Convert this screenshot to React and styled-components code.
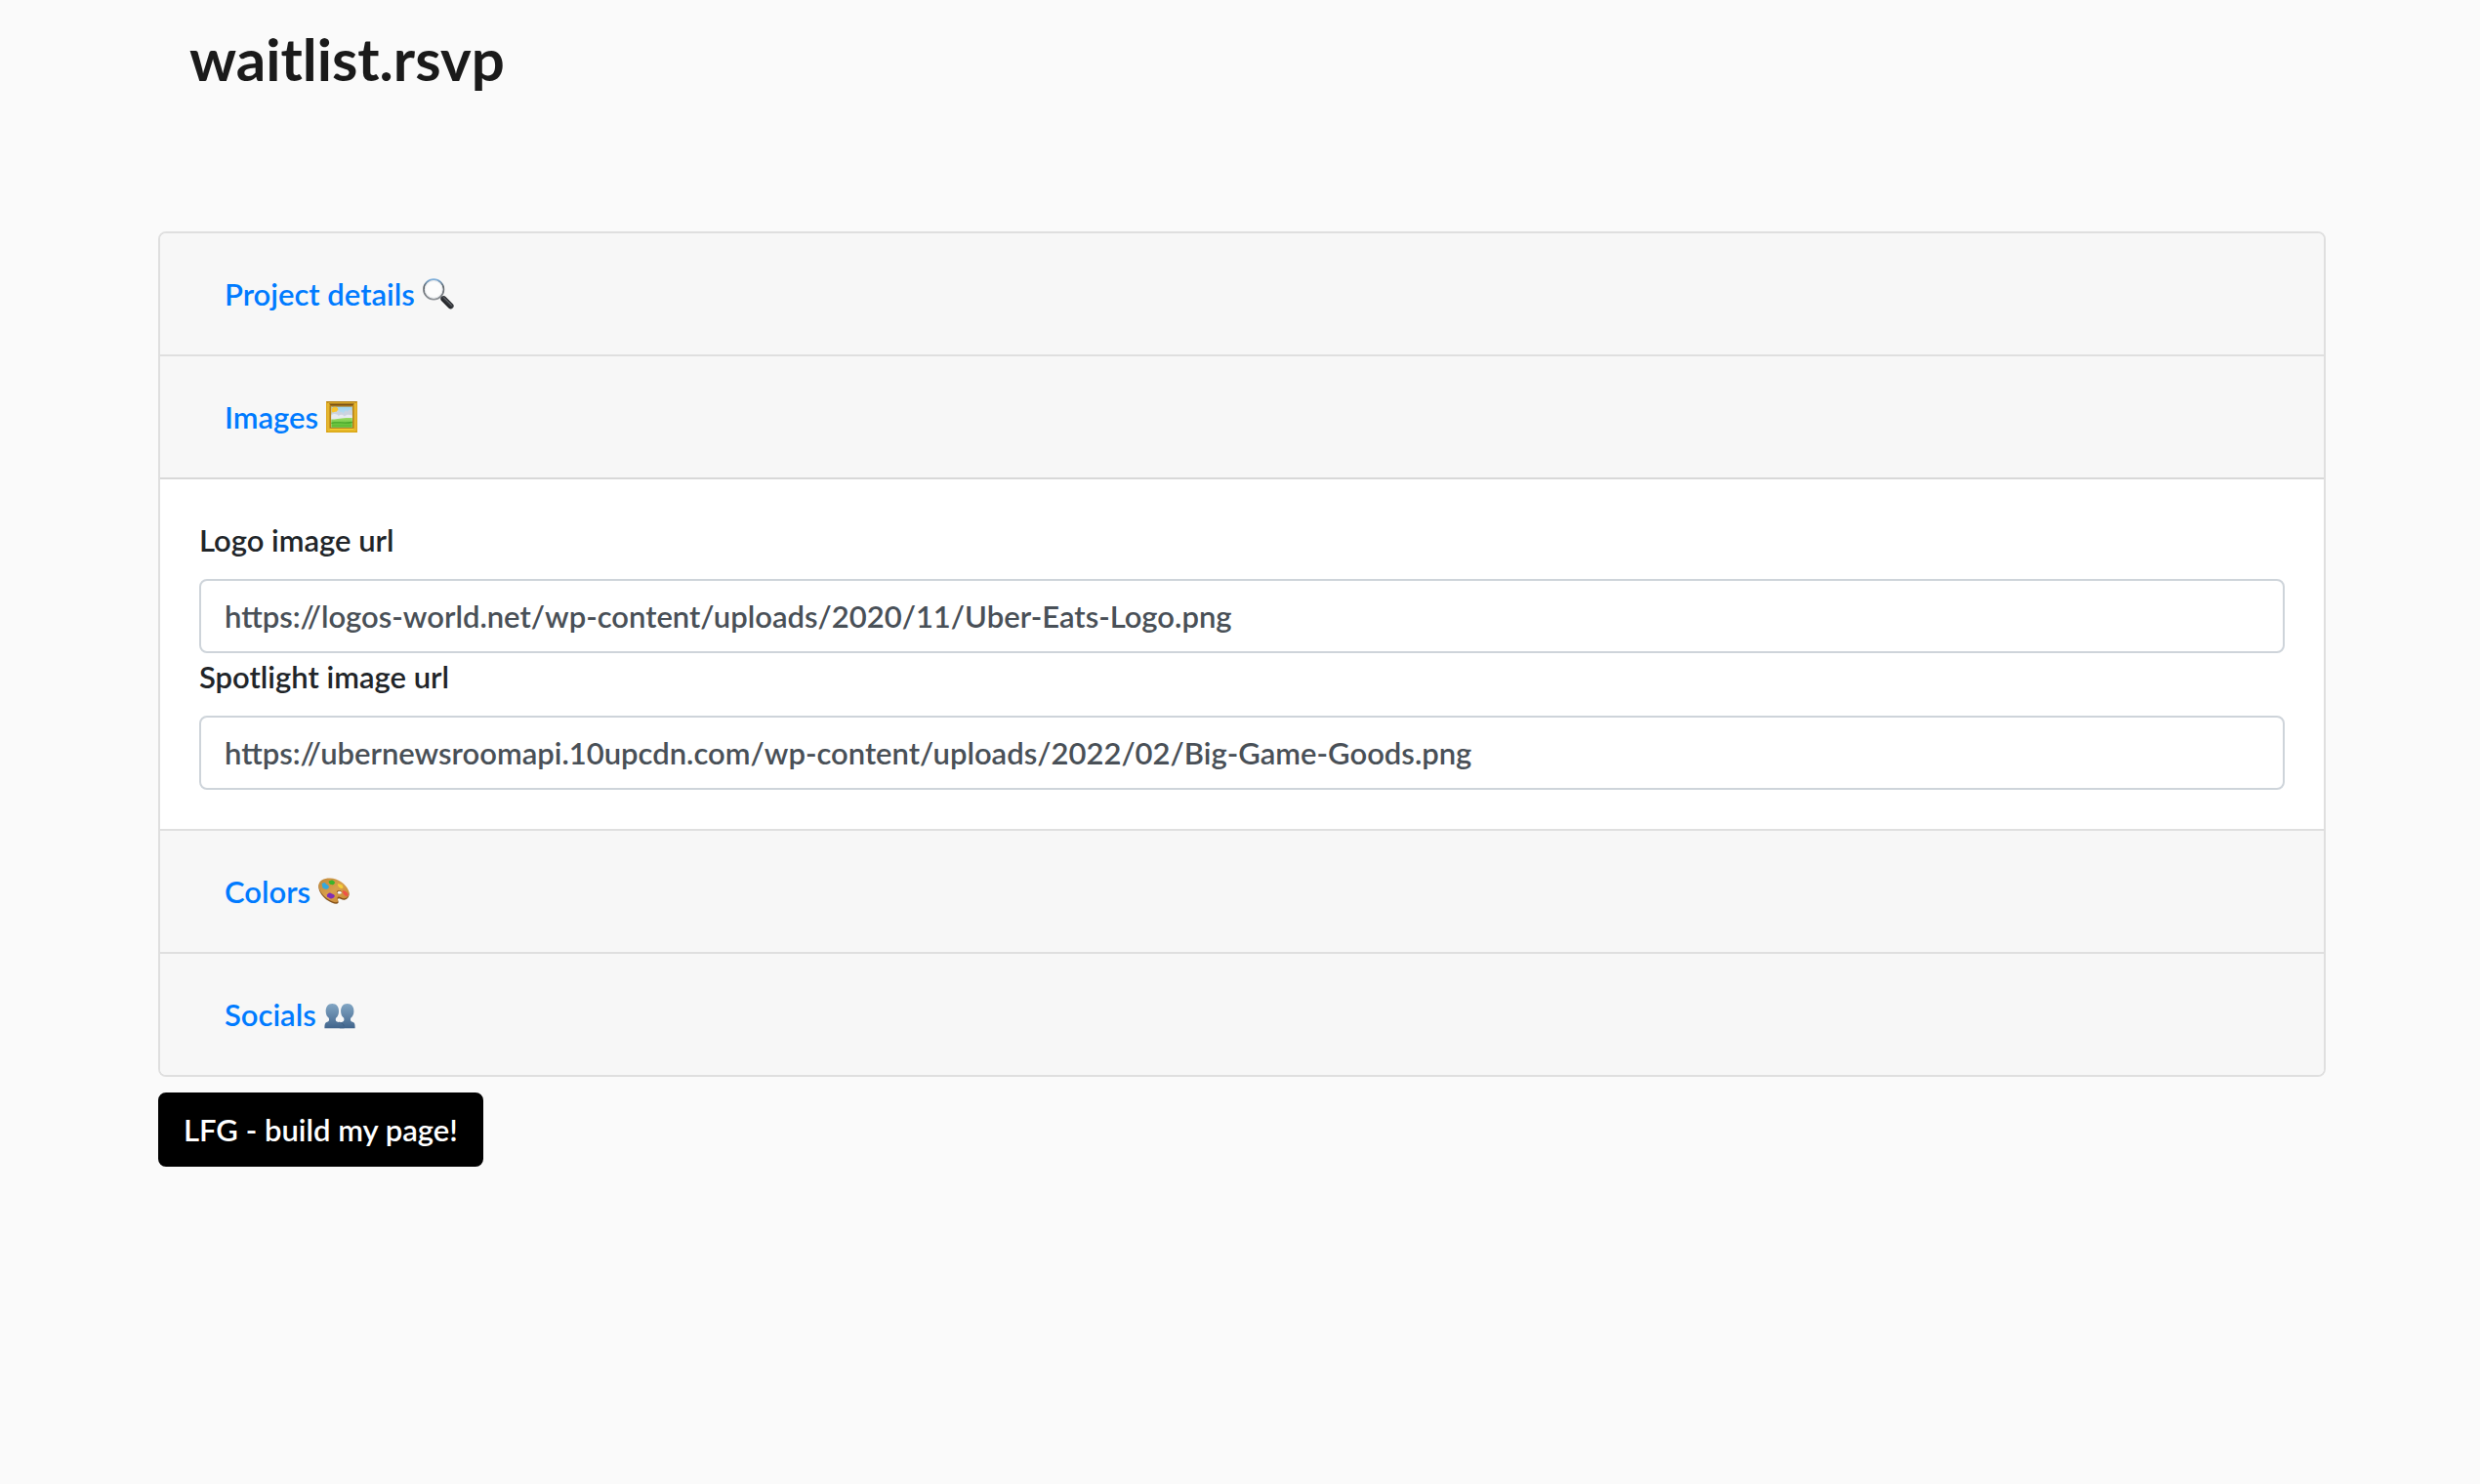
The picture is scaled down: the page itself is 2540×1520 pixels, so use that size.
//react
import React, { useState } from "react";

//style
import styled, { createGlobalStyle } from "styled-components";

const GlobalStyle = createGlobalStyle`
  *{box-sizing:border-box;}
  body{
    margin:0;
    background:#fafafa;
    color:#212529;
    font-family:Lato,"Liberation Sans",sans-serif;
    font-size:31px;font-weight:600;line-height:48px;
  }
`

function MagnifierIcon(){
  return (
    <Icon viewBox="0 0 32 32" aria-hidden="true">
      <defs>
        <linearGradient id="rim" x1="0" y1="0" x2="0" y2="1">
          <stop offset="0" stopColor="#7fb0dc"/>
          <stop offset="0.35" stopColor="#5c6268"/>
          <stop offset="1" stopColor="#8d9196"/>
        </linearGradient>
        <linearGradient id="handle" x1="0" y1="1" x2="1" y2="0">
          <stop offset="0" stopColor="#0c0c0e"/>
          <stop offset="0.6" stopColor="#3c3f44"/>
          <stop offset="1" stopColor="#141416"/>
        </linearGradient>
      </defs>
      <path d="M18.4 18.6l3 3" stroke="#6f7479" strokeWidth="2.4"/>
      <path d="M21.4 21.2l7.2 7.2" stroke="url(#handle)" strokeWidth="6" strokeLinecap="round"/>
      <path d="M21.6 19.9l7.8 7.6" stroke="#74787d" strokeWidth="0.9" strokeLinecap="round"/>
      <circle cx="11.2" cy="11.4" r="10.2" fill="#fcfcfc" stroke="url(#rim)" strokeWidth="1.7"/>
      <circle cx="11.2" cy="11.4" r="8.8" fill="none" stroke="#dde1e5" strokeWidth="0.7"/>
    </Icon>
  );
}

function FrameIcon(){
  return (
    <Icon viewBox="0 0 32 32" aria-hidden="true">
      <defs>
        <linearGradient id="sky" x1="0" y1="0" x2="0" y2="1">
          <stop offset="0" stopColor="#9fd3ee"/>
          <stop offset="1" stopColor="#e5eff3"/>
        </linearGradient>
        <linearGradient id="grass" x1="0" y1="0" x2="0" y2="1">
          <stop offset="0" stopColor="#9bdc66"/>
          <stop offset="1" stopColor="#55b82c"/>
        </linearGradient>
      </defs>
      <path d="M0 0h32v32H0z" fill="#dba520"/>
      <path d="M0 0h32l-3 3H3z" fill="#b8841a"/>
      <path d="M0 32h32l-3-3H3z" fill="#d9a511"/>
      <path d="M2 2h28v28H2z" fill="none" stroke="#f0c63b" strokeWidth="1"/>
      <path d="M3 2.4h26l-3.2 3H6.2z" fill="#795016"/>
      <path d="M3 29l2.6-2.4h20.8L29 29z" fill="#f8d732"/>
      <path d="M4.2 4.6h23.6v22.8H4.2z" fill="none" stroke="#a9751b" strokeWidth="1"/>
      <path d="M5.4 5.6h21.4v21.2H5.4z" fill="url(#sky)"/>
      <circle cx="9" cy="9" r="3.3" fill="#f9c42c"/>
      <path d="M5.4 13c2-1.7 3.4-2.7 5-2 1-2.6 3.4-2.4 4.2.2 1.8-.8 2.6.6 3.4 1.6 1-3.4 2.8-4.6 3.6-1.6 1.2-2.6 3.2-3 5.2-1.6V18H5.4z" fill="#ccd3df"/>
      <path d="M5.4 14.6c2.4-2.4 5.6-1.6 7.4.4 2-2 4.6-1 6 .4 2-2.2 5.4-2 8-.8V19H5.4z" fill="#e7eaf0"/>
      <path d="M5.4 18.4c6 .4 10-2 21.4-1.4v9.8H5.4z" fill="url(#grass)"/>
      <path d="M5.4 21.8c6-1.4 13 .6 21.4-1v1.4c-8 1.4-14-.4-21.4.8z" fill="#46a52a"/>
    </Icon>
  );
}

function PaletteIcon(){
  return (
    <Icon viewBox="0 0 32 32" aria-hidden="true">
      <defs>
        <linearGradient id="wood" x1="0" y1="0" x2="1" y2="1">
          <stop offset="0" stopColor="#c0883a"/>
          <stop offset="0.5" stopColor="#d9a04c"/>
          <stop offset="1" stopColor="#c5832f"/>
        </linearGradient>
      </defs>
      <path d="M.4 10.6C.9 5.8 6 3.2 12.2 3.4 20 3.7 28 9 31 16.2c1.6 4-.4 8-4.2 8.500-2.800.3-4.600-1.800-6.300-1.300-1.700.6 1 3-.2 4.600-1.400 1.700-6.300.5-10.300-2.400C4.200 21.600-.1 15.600.4 10.600z" fill="#845018"/>
      <path d="M.4 9.600C.9 5 6 2.400 12.200 2.600 20 2.900 28 8.200 31 15.200c1.600 4-.4 7.600-4.200 8.100-2.800.3-4.800-2.200-6.600-1.600-1.900.7.9 3.300-.3 4.900-1.300 1.500-5.900.3-9.900-2.500C4.200 20.200-.1 14.400.4 9.600z" fill="url(#wood)"/>
      <ellipse cx="21.400" cy="17" rx="2.500" ry="1.900" fill="#8a531d"/>
      <ellipse cx="21.700" cy="17.300" rx="2.100" ry="1.500" fill="#f7f7f7"/>
      <path d="M3.600 8.200c1.200-.3 2-1.600 3.400-.9.500 1.600 4 2 3.900 4.300-.2 1.800-2.200 2.500-3.700 2.200-1.300-.5-3.600-1.200-3-3z" fill="#35a9dd"/>
      <path d="M10.800 5.200c1.400.3 2-1.300 3.700-.6.800.8 2.500 1.300 2.500 2.600-.5 1.500-2.100 2.400-3.700 1.900-1.700-.3-2.900-1.900-2.500-3.900z" fill="#3bb52b"/>
      <path d="M19.900 8.200c2-.3 3 .9 4.600 1.100-.2 1 1.500 2.300.8 3.300-1.400.8-3.500.2-4.200-1-.3-1-1.600-1.700-1.200-3.400z" fill="#f4cf37"/>
      <path d="M24.700 15.400c2.200-.4 4.200 1 5.600 3 .6 1.400.3 2.500-.9 2.500-1.800-.2-3.500-1.400-4-3-.2-.8-1.100-1.300-.7-2.500z" fill="#ee5347"/>
      <path d="M8.700 19.600c1.300-1 2-2.700 4-1.800 1 .8 3 .8 4.100 2.500.2 1.600-1.600 3-3.500 3.200-2-.2-3.200-1.700-4.200-1.800z" fill="#812db5"/>
    </Icon>
  );
}

function PeopleIcon(){
  return (
    <Icon viewBox="0 0 32 32" aria-hidden="true">
      <defs>
        <linearGradient id="bust" x1="0" y1="0" x2="0" y2="1">
          <stop offset="0" stopColor="#82a6c4"/>
          <stop offset="1" stopColor="#42658c"/>
        </linearGradient>
      </defs>
      <path d="M23.7 5c4.400 0 7 3.200 6.700 8.300-.1 3.300-1.600 5.200-3.200 6.500-.8 3 .6 3.800 2.600 4.300 1.600.5 1.900 2.500 1.800 6.100H15.800c0-3.600.4-5.600 2-6.100 2-.6 3.200-1.600 2.400-4.300-1.800-1.300-3-3.500-3.100-6.500C16.900 8.400 19.300 5 23.700 5z" fill="url(#bust)"/>
      <path d="M8.300 5c4.400 0 7 3.200 6.700 8.300-.1 3.300-1.400 5.200-3 6.500-.8 3 .4 3.800 3 4.300 3.800.5 5.400 2.500 5.500 6.100H.4c0-3.600.4-5.600 2-6.100 2-.6 3.200-1.300 2.400-4.300-1.800-1.300-3-3.500-3.100-6.500C1.500 8.400 3.900 5 8.300 5z" fill="url(#bust)"/>
      <path d="M15 24.100c2.700.3 4.700 1.200 5.300 4" fill="none" stroke="#36587c" strokeWidth="0.7"/>
    </Icon>
  );
}

const sections = [
  { id:"details", title:"Project details", icon:<MagnifierIcon/>, fields:[] },
  { id:"images", title:"Images", icon:<FrameIcon/>, fields:[
    { id:"logo", label:"Logo image url" },
    { id:"spotlight", label:"Spotlight image url" },
  ]},
  { id:"colors", title:"Colors", icon:<PaletteIcon/>, fields:[] },
  { id:"socials", title:"Socials", icon:<PeopleIcon/>, fields:[] },
];

export default function App(){
  const [open,setOpen] = useState("images");
  const [values,setValues] = useState({
    logo:"https://logos-world.net/wp-content/uploads/2020/11/Uber-Eats-Logo.png",
    spotlight:"https://ubernewsroomapi.10upcdn.com/wp-content/uploads/2022/02/Big-Game-Goods.png",
  });

  const valueChange = (e) =>{ setValues({...values,[e.target.name]:e.target.value}); }
  const toggle = (id) =>{ setOpen(open === id ? "" : id); }

  return (
    <>
      <GlobalStyle/>
      <Header>
        <Brand>waitlist.rsvp</Brand>
      </Header>
      <Form onSubmit={(e) => e.preventDefault()}>
        <Accordion>
          {sections.map((section) => (
            <Card key={section.id}>
              <CardHeader>
                <Toggle type="button" aria-expanded={open === section.id} onClick={() => toggle(section.id)}>
                  {section.title}{section.icon}
                </Toggle>
              </CardHeader>
              {open === section.id && section.fields.length > 0 &&
                <CardBody>
                  {section.fields.map((field) => (
                    <Field key={field.id}>
                      <Label htmlFor={field.id}>{field.label}</Label>
                      <Input type="text" id={field.id} name={field.id} value={values[field.id]} onChange={valueChange}/>
                    </Field>
                  ))}
                </CardBody>
              }
            </Card>
          ))}
        </Accordion>
        <Submit type="submit">LFG - build my page!</Submit>
      </Form>
    </>
  );
}

const Header = styled.header`
  padding:22px 194px 0;
`
const Brand = styled.h1`
  margin:0;
  font-size:60px;font-weight:700;line-height:76px;
  color:#1a1a1a;
`
const Form = styled.form`
  padding:139px 158px 0 162px;
`
const Accordion = styled.div`
  border:2px solid #dfdfdf;
  border-radius:8px;
  background:#fff;
  overflow:hidden;
`
const Card = styled.section`
  border-bottom:2px solid #dfdfdf;
  &:last-child{border-bottom:0;}
`
const CardHeader = styled.h2`
  margin:0;
  padding:24px 40px;
  background:#f7f7f7;
  font-size:31px;line-height:48px;
`
const Toggle = styled.button`
  display:flex;align-items:center;gap:8px;
  width:100%;
  padding:12px 24px;
  border:2px solid transparent;
  border-radius:8px;
  background:transparent;
  color:#007bff;
  font:inherit;font-weight:600;text-align:left;
  cursor:pointer;
`
const Icon = styled.svg`
  width:32px;height:32px;
  flex:none;
`
const CardBody = styled.div`
  padding:38px 40px 40px;
  border-top:2px solid #d8d8d8;
`
const Field = styled.div`
  display:flex;flex-direction:column;
`
const Label = styled.label`
  margin-bottom:16px;
`
const Input = styled.input`
  width:100%;height:76px;
  padding:12px 24px;
  border:2px solid #ced4da;
  border-radius:8px;
  background:#fff;
  color:#495057;
  font:inherit;
`
const Submit = styled.button`
  margin-top:16px;
  padding:12px 24px;
  border:2px solid #000;
  border-radius:8px;
  background:#000;
  color:#fff;
  font:inherit;
  cursor:pointer;
`
